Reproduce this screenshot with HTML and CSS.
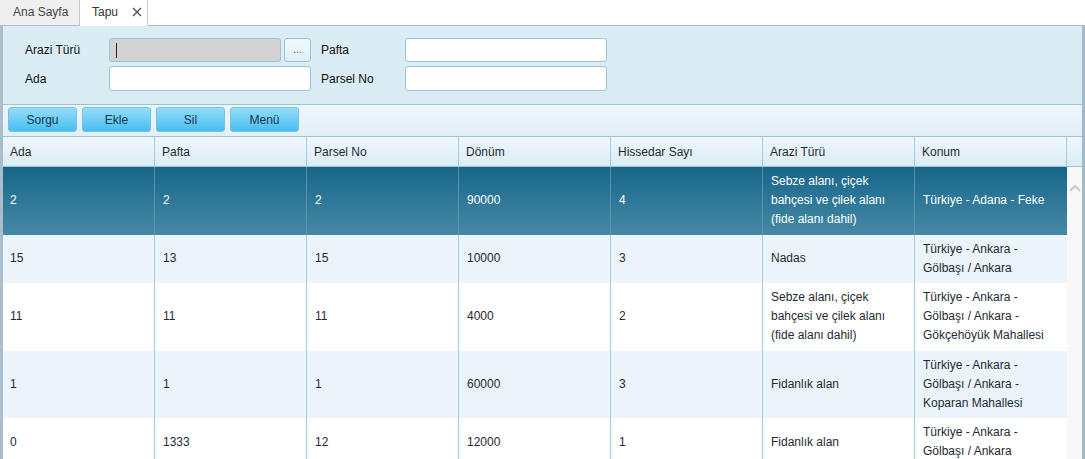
FILE: index.html
```html
<!DOCTYPE html>
<html>
<head>
<meta charset="utf-8">
<link rel="stylesheet" href="styles.css">
</head>
<body>
<div class="tabs">
  <div class="tab">Ana Sayfa</div>
  <div class="tab active">Tapu <svg class="close" width="10" height="10" viewBox="0 0 10 10"><path d="M1 1L9 9M9 1L1 9" stroke="#555" stroke-width="1.4"/></svg></div>
  <div class="tab-fill"></div>
</div>
<div class="panel">
  <div class="form">
    <label class="lbl">Arazi Türü</label>
    <div class="pick"><div class="inp grey"><span class="caret"></span></div><div class="dots">...</div></div>
    <label class="lbl">Pafta</label>
    <div class="inp"></div>
    <label class="lbl">Ada</label>
    <div class="inp"></div>
    <label class="lbl">Parsel No</label>
    <div class="inp"></div>
  </div>
  <div class="toolbar">
    <button class="btn">Sorgu</button>
    <button class="btn">Ekle</button>
    <button class="btn">Sil</button>
    <button class="btn">Menü</button>
  </div>
  <div class="head">
    <div class="hc">Ada</div><div class="hc">Pafta</div><div class="hc">Parsel No</div><div class="hc">Dönüm</div><div class="hc">Hissedar Sayı</div><div class="hc">Arazi Türü</div><div class="hc">Konum</div><div class="hc last"></div>
  </div>
  <div class="body">
    <div class="rows">
      <div class="row sel">
        <div class="c">2</div><div class="c">2</div><div class="c">2</div><div class="c">90000</div><div class="c">4</div><div class="c">Sebze alanı, çiçek<br>bahçesi ve çilek alanı<br>(fide alanı dahil)</div><div class="c">Türkiye - Adana - Feke</div>
      </div>
      <div class="row alt">
        <div class="c">15</div><div class="c">13</div><div class="c">15</div><div class="c">10000</div><div class="c">3</div><div class="c">Nadas</div><div class="c">Türkiye - Ankara -<br>Gölbaşı / Ankara</div>
      </div>
      <div class="row">
        <div class="c">11</div><div class="c">11</div><div class="c">11</div><div class="c">4000</div><div class="c">2</div><div class="c">Sebze alanı, çiçek<br>bahçesi ve çilek alanı<br>(fide alanı dahil)</div><div class="c">Türkiye - Ankara -<br>Gölbaşı / Ankara -<br>Gökçehöyük Mahallesi</div>
      </div>
      <div class="row alt">
        <div class="c">1</div><div class="c">1</div><div class="c">1</div><div class="c">60000</div><div class="c">3</div><div class="c">Fidanlık alan</div><div class="c">Türkiye - Ankara -<br>Gölbaşı / Ankara -<br>Koparan Mahallesi</div>
      </div>
      <div class="row">
        <div class="c">0</div><div class="c">1333</div><div class="c">12</div><div class="c">12000</div><div class="c">1</div><div class="c">Fidanlık alan</div><div class="c">Türkiye - Ankara -<br>Gölbaşı / Ankara</div>
      </div>
    </div>
    <div class="scroll">
      <svg class="chev" width="12" height="8" viewBox="0 0 12 8"><path d="M1 7L6 2L11 7" fill="none" stroke="#c9c9c9" stroke-width="2"/></svg>
    </div>
  </div>
</div>
</body>
</html>
```
FILE: styles.css
```css
* { box-sizing: border-box; }
html, body { margin: 0; padding: 0; height: 100%; overflow: hidden; }
body {
  font-family: "Liberation Sans", Arial, sans-serif;
  font-size: 12px;
  color: #1e2a33;
  background: #fff;
}
.tabs {
  display: flex;
  height: 26px;
}
.tab {
  height: 26px;
  line-height: 25px;
  padding: 0 0 0 13px;
  color: #444;
  background: #efefef;
  border-right: 1px solid #c9c9c9;
  border-bottom: 1px solid #a9bfcc;
  width: 80px;
}
.tab.active {
  background: #fff;
  width: 68px;
  padding-left: 12px;
  border-bottom: 1px solid #fff;
  color: #333;
}
.close { margin-left: 11px; vertical-align: -1px; }
.tab-fill { flex: 1; border-bottom: 1px solid #a9bfcc; }

.panel {
  border-left: 3px solid #a9bdca;
  border-right: 3px solid #a3b9c8;
  height: 433px;
  display: flex;
  flex-direction: column;
}
.form {
  background: #daecf4;
  display: grid;
  grid-template-columns: 84px 202px 10px 84px 202px;
  grid-template-rows: 24px 25px;
  row-gap: 4px;
  padding: 12px 0 13px 22px;
  align-items: center;
}
.form .lbl { color: #111; }
.form .lbl:nth-of-type(2), .form .lbl:nth-of-type(4) { grid-column: 4; }
.pick { display: flex; gap: 3px; height: 24px; }
.inp {
  height: 100%;
  background: #fff;
  border: 1px solid #98c3d8;
  border-radius: 3px;
  position: relative;
}
.form > .inp { grid-column: 5; }
.form > .inp:nth-child(6) { grid-column: 2; }
.inp.grey { background: #d3d3d3; width: 172px; }
.caret {
  position: absolute;
  left: 6px; top: 4px;
  width: 1px; height: 15px;
  background: #222;
}
.dots {
  width: 27px;
  height: 24px;
  border: 1px solid #98c3d8;
  border-radius: 3px;
  background: linear-gradient(#f1f8fc, #e2eff6);
  color: #2a6f9a;
  text-align: center;
  line-height: 20px;
  font-size: 11px;
}
.toolbar {
  border-top: 1px solid #98c3d8;
  background: linear-gradient(#eef6fb, #e3eff6);
  height: 32px;
  padding: 2px 0 0 5px;
  display: flex;
  gap: 5px;
  align-items: flex-start;
}
.btn {
  width: 69px;
  height: 25px;
  font: inherit;
  color: #15364a;
  border: 1px solid #79bfe0;
  border-radius: 3px;
  background: linear-gradient(#95dcf9, #46bff0);
  padding: 0;
}
.head {
  display: grid;
  grid-template-columns: repeat(7, 152px) 15px;
  border-top: 1px solid #98c3d8;
  border-bottom: 1px solid #98c3d8;
  background: linear-gradient(#eff7fc, #dbebf4);
  height: 31px;
}
.hc {
  border-right: 1px solid #a3cbe0;
  padding-left: 7px;
  line-height: 30px;
  color: #1e2a33;
}
.hc.last { border-right: none; }
.body {
  flex: 1;
  display: flex;
  overflow: hidden;
}
.rows { width: 1064px; }
.row {
  display: grid;
  grid-template-columns: repeat(7, 152px);
  background: #fff;
}
.row.alt { background: #eaf4fa; }
.row.sel {
  background: linear-gradient(#17668a, #4689a6);
  color: #fff;
}
.c {
  border-right: 1px solid #a3cbe0;
  padding: 5px 4px 5.5px 8px;
  line-height: 19px;
  display: flex;
  align-items: center;
}
.row .c:first-child { padding-left: 7px; }
.row.sel .c { border-right-color: #5b93ad; }
.row .c:last-child { border-right: none; }
.scroll {
  flex: 1;
  background: #f8f8f8;
  padding: 17px 0 0 2px;
}
.chev { display: block; }
```
